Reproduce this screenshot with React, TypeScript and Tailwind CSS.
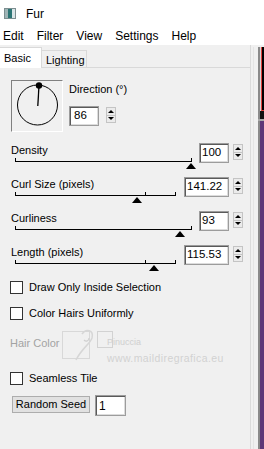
import React from "react";

function Spinner({ className = "" }: { className?: string }) {
  return (
    <div className={"flex flex-col w-[10px] h-[16px] border border-[#c4c4c4] bg-[#ebebeb] " + className}>
      <div className="flex-1 flex items-center justify-center border-b border-[#c4c4c4]">
        <div className="w-0 h-0 border-l-[3px] border-r-[3px] border-b-[3px] border-l-transparent border-r-transparent border-b-black" />
      </div>
      <div className="flex-1 flex items-center justify-center">
        <div className="w-0 h-0 border-l-[3px] border-r-[3px] border-t-[3px] border-l-transparent border-r-transparent border-t-black" />
      </div>
    </div>
  );
}

function NumBox({ value, wide }: { value: string; wide?: boolean }) {
  return (
    <div
      className={
        (wide ? "w-[45px] " : "w-[30px] ") +
        "h-[20px] bg-white border border-[#9c9c9c] shadow-[inset_1px_1px_0_#5a5a5a,inset_-1px_-1px_0_#dcdcdc] flex items-center pl-[2px] text-[11.5px] leading-none"
      }
    >
      {value}
    </div>
  );
}

function Slider({ width, thumb, mid }: { width: number; thumb: number; mid?: number }) {
  return (
    <div className="relative ml-[15px] h-[10px] border-t border-black" style={{ width }}>
      <div className="absolute left-0 top-[-4px] w-px h-[4px] bg-black" />
      <div className="absolute right-0 top-[-4px] w-px h-[4px] bg-black" />
      {mid !== undefined && <div className="absolute top-[-4px] w-px h-[4px] bg-black" style={{ left: mid }} />}
      <div
        className="absolute top-[1px] w-0 h-0 border-l-[5px] border-r-[5px] border-b-[6px] border-l-transparent border-r-transparent border-b-black"
        style={{ left: thumb - 5 }}
      />
    </div>
  );
}

function SliderRow({
  label,
  value,
  wide,
  width,
  thumb,
  mid,
}: {
  label: string;
  value: string;
  wide?: boolean;
  width: number;
  thumb: number;
  mid?: number;
}) {
  return (
    <div className="flex w-[243px] h-[34px]">
      <div className="flex-1 flex flex-col">
        <div className="pl-[11px] text-[11px] leading-[13px] h-[13px]">{label}</div>
        <div className="mt-[4px]">
          <Slider width={width} thumb={thumb} mid={mid} />
        </div>
      </div>
      <div className="flex items-start gap-[4px] mt-[-1px]">
        <NumBox value={value} wide={wide} />
        <Spinner className="mt-[1px]" />
      </div>
    </div>
  );
}

function Check({ label }: { label: string }) {
  return (
    <div className="flex items-center h-[13px] pl-[10px]">
      <div className="w-[13px] h-[13px] border border-[#333333] bg-white" />
      <span className="ml-[6px] text-[11px] leading-[13px]">{label}</span>
    </div>
  );
}

export default function App() {
  return (
    <div className="w-[264px] h-[449px] overflow-hidden bg-[#f0f0f0] flex flex-col text-black font-['Liberation_Sans',Arial,sans-serif]">
      {/* title bar */}
      <div className="h-[27px] bg-white flex items-center shrink-0">
        <svg className="ml-[4px]" width="12" height="11" viewBox="0 0 12 11">
          <rect x="0.5" y="0.5" width="11" height="10" fill="#c9d6d8" stroke="#7c8e90" />
          <rect x="1" y="1" width="3" height="9" fill="#9fb4b6" />
          <rect x="4" y="1" width="4" height="9" fill="#2c7474" />
          <rect x="8" y="1" width="3" height="9" fill="#d9e4e6" />
        </svg>
        <span className="ml-[10px] text-[12px] leading-none">Fur</span>
      </div>
      {/* menu bar */}
      <div className="h-[18px] bg-white flex items-center gap-[13px] pl-[3px] text-[12px] leading-none shrink-0">
        <span>Edit</span>
        <span>Filter</span>
        <span>View</span>
        <span>Settings</span>
        <span>Help</span>
      </div>
      {/* body */}
      <div className="flex flex-1 min-h-0">
        <div className="w-[251px] border-r border-[#dadada] flex flex-col">
          {/* tabs */}
          <div className="h-[23px] flex items-end shrink-0">
            <div className="h-[21px] w-[42px] bg-white border-r border-t border-[#d9d9d9] flex items-center pl-[4px] text-[11px] leading-none">
              Basic
            </div>
            <div className="h-[18px] w-[45px] border-t border-r border-b border-[#d9d9d9] flex items-center pl-[4px] pt-[2px] text-[11px] leading-none">
              Lighting
            </div>
            <div className="flex-1 h-full border-b border-[#d9d9d9]" />
          </div>
          {/* panel */}
          <div className="relative flex flex-col flex-1">
            {/* direction */}
            <div className="flex mt-[12px] pl-[11px]">
              <div className="w-[52px] h-[52px] border border-t-[#808080] border-l-[#808080] border-r-white border-b-white">
                <svg width="50" height="50" viewBox="0 0 50 50">
                  <circle cx="25.5" cy="24" r="20" fill="none" stroke="#000" strokeWidth="1" />
                  <line x1="27" y1="4.5" x2="25.8" y2="25" stroke="#000" strokeWidth="1.3" />
                  <circle cx="27" cy="4.5" r="3.2" fill="#000" />
                </svg>
              </div>
              <div className="ml-[6px] flex flex-col">
                <div className="mt-[3px] text-[11px] leading-[13px]">Direction (°)</div>
                <div className="mt-[10px] flex items-start">
                  <div className="w-[30px] h-[20px] bg-white border border-[#9c9c9c] shadow-[inset_1px_1px_0_#5a5a5a,inset_-1px_-1px_0_#dcdcdc] flex items-center pl-[4px] text-[11.5px] leading-none">
                    86
                  </div>
                  <Spinner className="ml-[7px] mt-[1px]" />
                </div>
              </div>
            </div>

            {/* sliders */}
            <div className="mt-[12px] flex flex-col">
              <SliderRow label="Density" value="100" width={177} thumb={176} />
              <SliderRow label="Curl Size (pixels)" value="141.22" wide width={161} thumb={122} mid={130} />
              <SliderRow label="Curliness" value="93" width={177} thumb={165} />
              <SliderRow label="Length (pixels)" value="115.53" wide width={161} thumb={139} mid={130} />
            </div>

            <div className="mt-[1px]">
              <Check label="Draw Only Inside Selection" />
            </div>
            <div className="mt-[13px]">
              <Check label="Color Hairs Uniformly" />
            </div>
            <div className="mt-[17px] pl-[10px] h-[13px] text-[11px] leading-[13px] text-[#a3a3a3]">Hair Color</div>
            <div className="mt-[22px]">
              <Check label="Seamless Tile" />
            </div>
            <div className="mt-[10px] pl-[12px] flex items-start">
              <div className="mt-[1px] w-[78px] h-[17px] bg-[#e1e1e1] border border-[#adadad] flex items-center justify-center text-[11px] leading-none">
                Random Seed
              </div>
              <div className="ml-[5px] w-[31px] h-[21px] bg-white border border-[#9c9c9c] shadow-[inset_1px_1px_0_#5a5a5a,inset_-1px_-1px_0_#dcdcdc] flex items-center pl-[3px] text-[12px] leading-none">
                1
              </div>
            </div>

            {/* faint watermark overlay */}
            <div className="absolute left-[62px] top-[263px] w-[28px] h-[28px] border border-[#d8d8d8] pointer-events-none" />
            <div className="absolute left-[97px] top-[263px] w-[16px] h-[17px] border border-[#d2d2d2] pointer-events-none" />
            <svg className="absolute left-[62px] top-[258px] pointer-events-none" width="50" height="40" viewBox="0 0 50 40">
              <path d="M20 8 C 24 2, 32 4, 30 12 C 28 18, 20 22, 14 34" fill="none" stroke="#d6d6d6" strokeWidth="1.5" />
              <path d="M22 14 C 24 16, 27 15, 27 12" fill="none" stroke="#d0d0d0" strokeWidth="1.2" />
            </svg>
            <div className="absolute left-[107px] top-[270px] text-[9px] leading-none text-[#cfcfcf] pointer-events-none">
              Pinuccia
            </div>
            <div className="absolute left-[107px] top-[285px] text-[10.5px] leading-none text-[#d2d2d2] tracking-[0.4px] pointer-events-none">
              www.maildiregrafica.eu
            </div>
          </div>
        </div>
        <div className="w-[7px] flex">
          <div className="ml-[2px] mt-[2px] w-px bg-[#e4e4e4]" />
        </div>
        {/* adjacent window strip */}
        <div className="w-[6px] flex flex-col pt-[2px]">
          <div className="h-[64px] flex">
            <div className="w-[2px] bg-[#8a8a8a]" />
            <div className="w-px bg-[#d8d8d8]" />
            <div className="flex-1 bg-black border-l border-b border-[#e0403a]" />
          </div>
          <div className="h-[8px] flex">
            <div className="w-[2px] bg-[#8a8a8a]" />
            <div className="flex-1 bg-[#111]" />
          </div>
          <div className="h-[2px] bg-[#a8a8a8]" />
          <div className="flex-1 flex">
            <div className="w-[2px] bg-[#8a8a8a]" />
            <div className="flex-1 bg-[#5e3677]" />
          </div>
        </div>
      </div>
    </div>
  );
}
